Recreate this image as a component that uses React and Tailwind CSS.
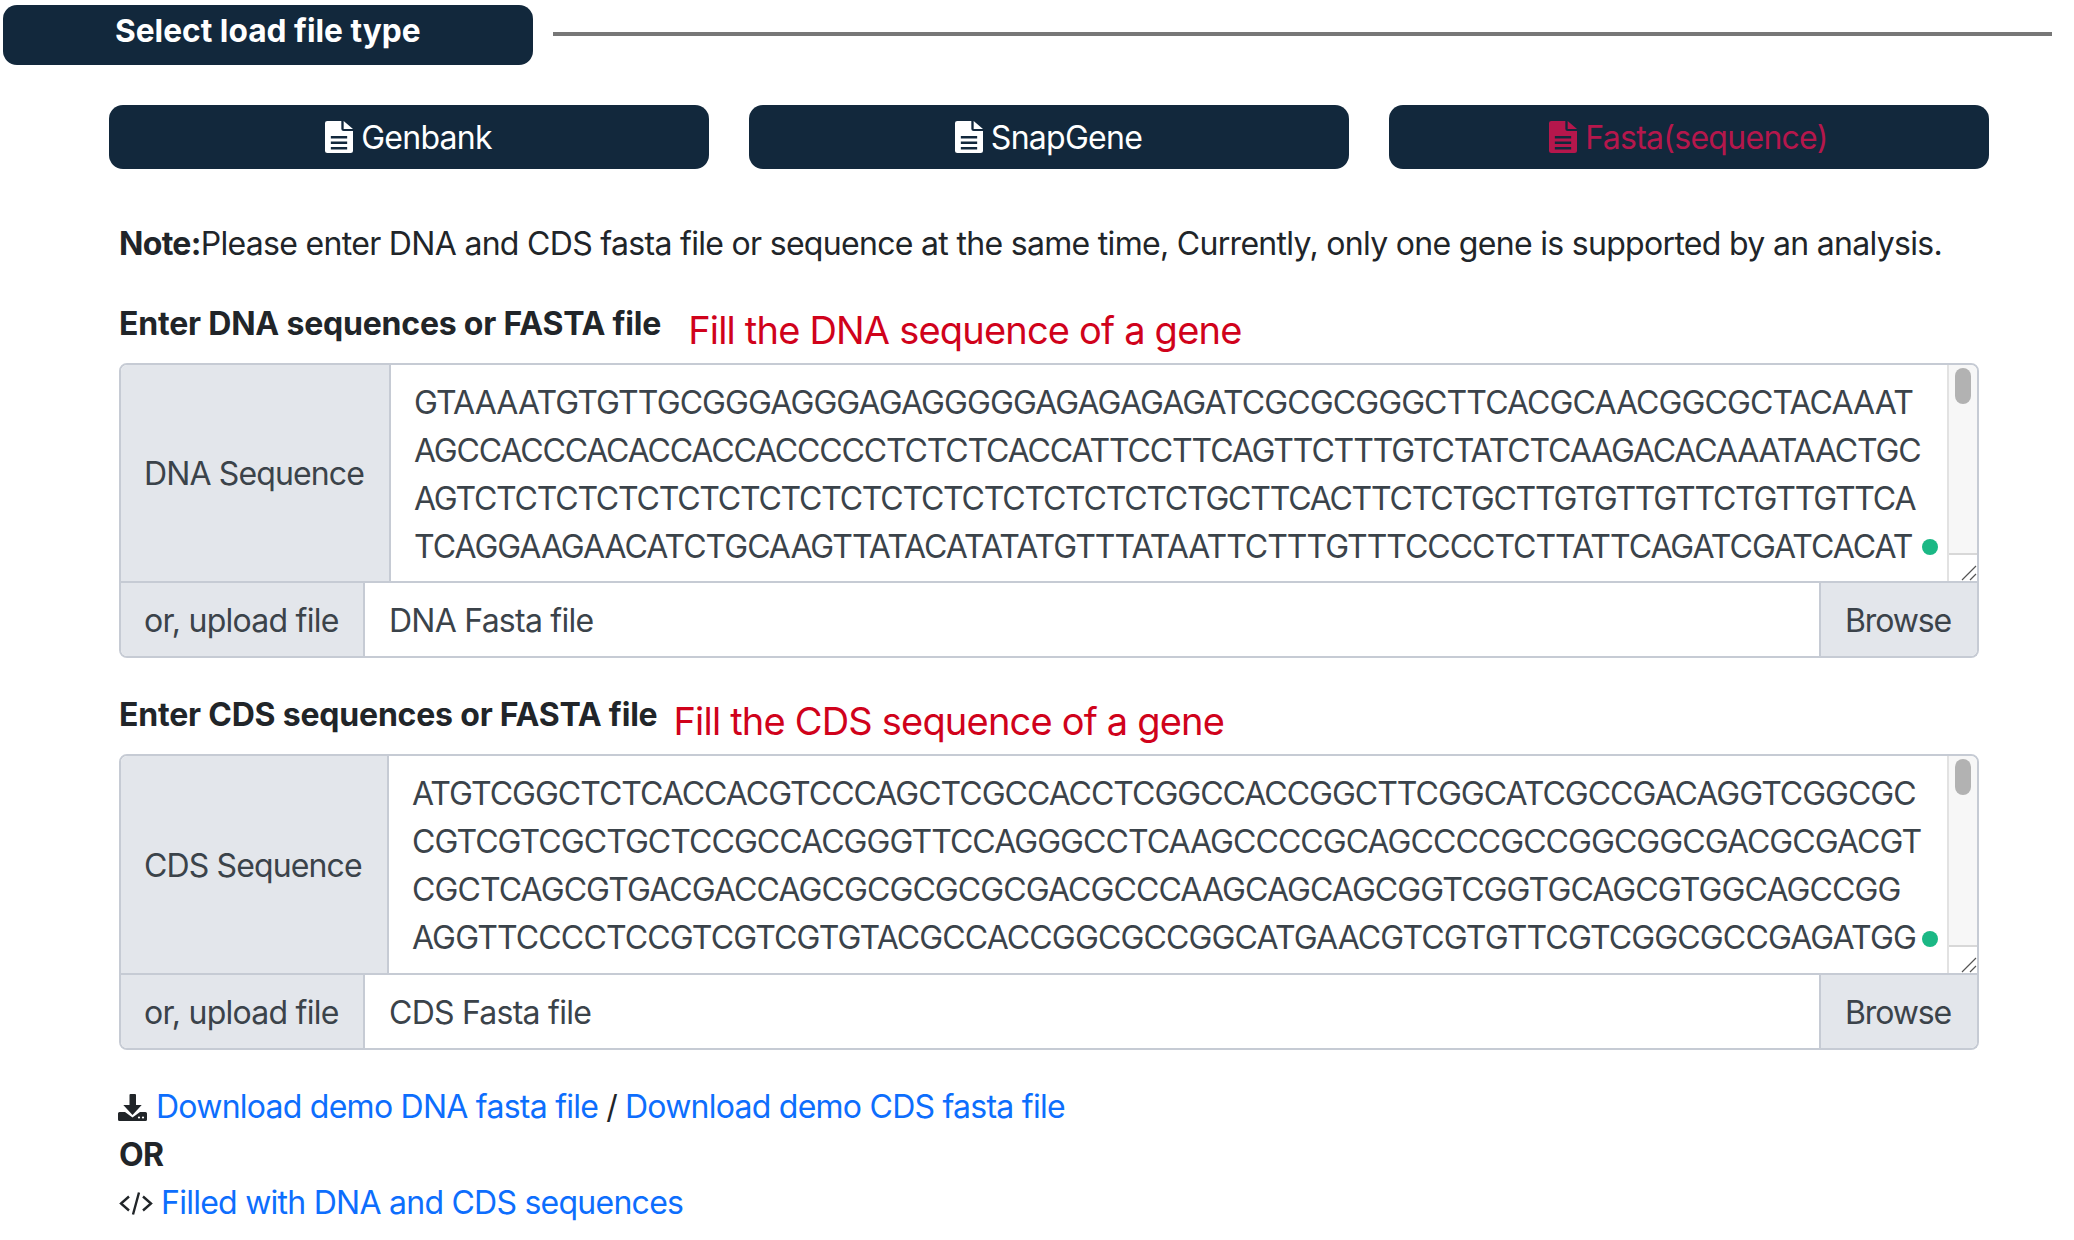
// tracking per line: the reference font kerns these letters tighter than Inter
const dnaLines = [
  { text: 'GTAAAATGTGTTGCGGGAGGGAGAGGGGGAGAGAGAGATCGCGCGGGCTTCACGCAACGGCGCTACAAAT', tracking: 'tracking-[-0.9px]' },
  { text: 'AGCCACCCACACCACCACCCCCTCTCTCACCATTCCTTCAGTTCTTTGTCTATCTCAAGACACAAATAACTGC', tracking: 'tracking-[-1.15px]' },
  { text: 'AGTCTCTCTCTCTCTCTCTCTCTCTCTCTCTCTCTCTCTGCTTCACTTCTCTGCTTGTGTTGTTCTGTTGTTCA', tracking: 'tracking-[-1.22px]' },
  { text: 'TCAGGAAGAACATCTGCAAGTTATACATATATGTTTATAATTCTTTGTTTCCCCTCTTATTCAGATCGATCACAT', tracking: 'tracking-[-1.02px]' },
];

const cdsLines = [
  { text: 'ATGTCGGCTCTCACCACGTCCCAGCTCGCCACCTCGGCCACCGGCTTCGGCATCGCCGACAGGTCGGCGC', tracking: 'tracking-[-1px]' },
  { text: 'CGTCGTCGCTGCTCCGCCACGGGTTCCAGGGCCTCAAGCCCCGCAGCCCCGCCGGCGGCGACGCGACGT', tracking: 'tracking-[-0.94px]' },
  { text: 'CGCTCAGCGTGACGACCAGCGCGCGCGCGACGCCCAAGCAGCAGCGGTCGGTGCAGCGTGGCAGCCGG', tracking: 'tracking-[-0.9px]' },
  { text: 'AGGTTCCCCTCCGTCGTCGTGTACGCCACCGGCGCCGGCATGAACGTCGTGTTCGTCGGCGCCGAGATGG', tracking: 'tracking-[-0.86px]' },
];

// file-earmark-text-fill
function FileIcon() {
  return (
    <svg className="w-[28px] h-[32px] ml-[-1px]" viewBox="0 0 24 32" preserveAspectRatio="none" fill="currentColor">
      <path d="M2 0h12v8a2 2 0 0 0 2 2h8v20a2 2 0 0 1-2 2H2a2 2 0 0 1-2-2V2a2 2 0 0 1 2-2z M16 0l8 8h-8z M5 15v2.5h14V15z M5 20.5V23h14v-2.5z M5 26v2.5h14V26z" fillRule="evenodd" />
    </svg>
  );
}

function DownloadIcon() {
  return (
    <svg className="w-[29px] h-[27px] mr-[9px] ml-[-1px]" viewBox="0 0 29 27" fill="#212529">
      <path d="M11.5 1a1 1 0 0 1 1-1h4.5a1 1 0 0 1 1 1v10h5.7L14.5 21 5.3 11h6.2z" />
      <path d="M1.5 18H7l7.5 5.5L22 18h5.5a1.5 1.5 0 0 1 1.5 1.5v6a1.5 1.5 0 0 1-1.5 1.5h-26A1.5 1.5 0 0 1 0 25.5v-6A1.5 1.5 0 0 1 1.5 18z" />
      <circle cx="21" cy="23.5" r="1.1" fill="#fff" />
      <circle cx="25" cy="23.5" r="1.1" fill="#fff" />
    </svg>
  );
}

function FileButton({ label, active }) {
  return (
    <button
      type="button"
      className={`flex-1 h-[64px] rounded-[14px] bg-[#12283c] flex items-center justify-center gap-[8px] text-[32px] tracking-[-0.72px] ${active ? 'text-[#b5174c]' : 'text-white'}`}
    >
      <FileIcon />
      <span className="pt-[2px]">{label}</span>
    </button>
  );
}

function SequenceBlock({ title, hint, gapClass, label, labelClass, boxClass, lines, placeholder }) {
  return (
    <div>
      <div className={`flex items-end h-[52px] pb-[11px] ${gapClass}`}>
        <h5 className="text-[32px] tracking-[-0.2px] font-bold text-[#212529] leading-[36px] mb-[8px] whitespace-nowrap">{title}</h5>
        <span className="text-[38px] tracking-[-0.8px] leading-[40px] text-[#d0021b] whitespace-nowrap">{hint}</span>
      </div>
      <div className={`flex mt-[2px] border-2 border-[#c6cbd4] rounded-t-[8px] overflow-hidden ${boxClass}`}>
        <div className={`shrink-0 flex items-center pl-[23px] pt-[2px] bg-[#e3e6eb] border-r-2 border-[#c6cbd4] text-[32px] tracking-[-0.87px] text-[#3b434a] whitespace-nowrap ${labelClass}`}>
          {label}
        </div>
        <div className="relative flex-1 pl-[23px] pt-[14px] text-[32px] leading-[48px] text-[#3b434a] whitespace-nowrap overflow-hidden">
          {lines.map((line) => (
            <div key={line.text} className={line.tracking}>{line.text}</div>
          ))}
          <span className="absolute right-[9px] bottom-[26px] w-[16px] h-[16px] rounded-full bg-[#1bb885]" />
        </div>
        <div className="shrink-0 w-[30px] flex flex-col bg-[#f7f7f7] border-l-2 border-[#e2e2e2]">
          <div className="flex-1 pt-[3px] flex justify-center">
            <div className="w-[16px] h-[36px] rounded-full bg-[#b2b2b2]" />
          </div>
          <div className="h-[28px] bg-white border-t-2 border-[#d8d8d8] flex items-end justify-end">
            <svg width="16" height="16" viewBox="0 0 16 16" stroke="#555" strokeWidth="1.2">
              <path d="M1 15 L15 1 M9 15 L15 9" />
            </svg>
          </div>
        </div>
      </div>
      <div className="flex h-[75px] border-2 border-t-0 border-[#c6cbd4] rounded-b-[8px] overflow-hidden text-[32px] tracking-[-0.75px] text-[#3b434a]">
        <div className="w-[244px] shrink-0 flex items-center pl-[23px] pt-[2px] bg-[#e3e6eb] border-r-2 border-[#c6cbd4] whitespace-nowrap">or, upload file</div>
        <div className="flex-1 flex items-center pl-[24px] pt-[2px]">{placeholder}</div>
        <div className="w-[158px] shrink-0 flex items-center justify-center pt-[2px] pr-[2px] tracking-[-1.1px] bg-[#e3e6eb] border-l-2 border-[#c6cbd4]">Browse</div>
      </div>
    </div>
  );
}

export default function App() {
  return (
    <div className="w-[2074px] h-[1240px] overflow-hidden bg-white font-['Inter',sans-serif]">
      {/* Section header */}
      <div className="flex items-center pt-[5px] pl-[3px]">
        <div className="w-[530px] h-[60px] rounded-[14px] bg-[#12283c] pl-[112px] pb-[8px] flex items-center text-[31.7px] font-bold text-white">
          Select load file type
        </div>
        <div className="w-[1499px] h-[4px] ml-[20px] mb-[3px] bg-[#777]" />
      </div>

      {/* File type buttons */}
      <div className="flex gap-[40px] pl-[109px] w-[1989px] mt-[40px]">
        <FileButton label="Genbank" />
        <FileButton label="SnapGene" />
        <FileButton label="Fasta(sequence)" active />
      </div>

      <div className="pl-[119px] w-[1979px]">
        <p className="mt-[52px] text-[32px] tracking-[-0.69px] leading-[46px] text-[#212529] whitespace-nowrap">
          <b className="font-bold">Note:</b>Please enter DNA and CDS fasta file or sequence at the same time, Currently, only one gene is supported by an analysis.
        </p>

        <div className="mt-[42px]">
          <SequenceBlock
            title="Enter DNA sequences or FASTA file"
            hint="Fill the DNA sequence of a gene"
            gapClass="gap-[27px]"
            label="DNA Sequence"
            labelClass="w-[270px]"
            boxClass="h-[220px]"
            lines={dnaLines}
            placeholder="DNA Fasta file"
          />
        </div>

        <div className="mt-[42px]">
          <SequenceBlock
            title="Enter CDS sequences or FASTA file"
            hint="Fill the CDS sequence of a gene"
            gapClass="gap-[16px]"
            label="CDS Sequence"
            labelClass="w-[268px]"
            boxClass="h-[221px]"
            lines={cdsLines}
            placeholder="CDS Fasta file"
          />
        </div>

        {/* Demo links */}
        <div className="mt-[33px] text-[32px] tracking-[-0.75px] leading-[48px] text-[#212529]">
          <div className="flex items-center">
            <DownloadIcon />
            <a className="text-[#0d6efd]">Download demo DNA fasta file</a>
            <span className="mx-[8px]">/</span>
            <a className="text-[#0d6efd]">Download demo CDS fasta file</a>
          </div>
          <div className="font-bold">OR</div>
          <div className="flex items-center">
            <svg className="w-[34px] h-[25px] mr-[8px]" viewBox="0 0 34 24" fill="none" stroke="#212529" strokeWidth="2.4">
              <path d="M10 5 L2 12 L10 19 M24 5 L32 12 L24 19 M20 1 L14 23" />
            </svg>
            <a className="text-[#0d6efd]">Filled with DNA and CDS sequences</a>
          </div>
        </div>
      </div>
    </div>
  );
}
